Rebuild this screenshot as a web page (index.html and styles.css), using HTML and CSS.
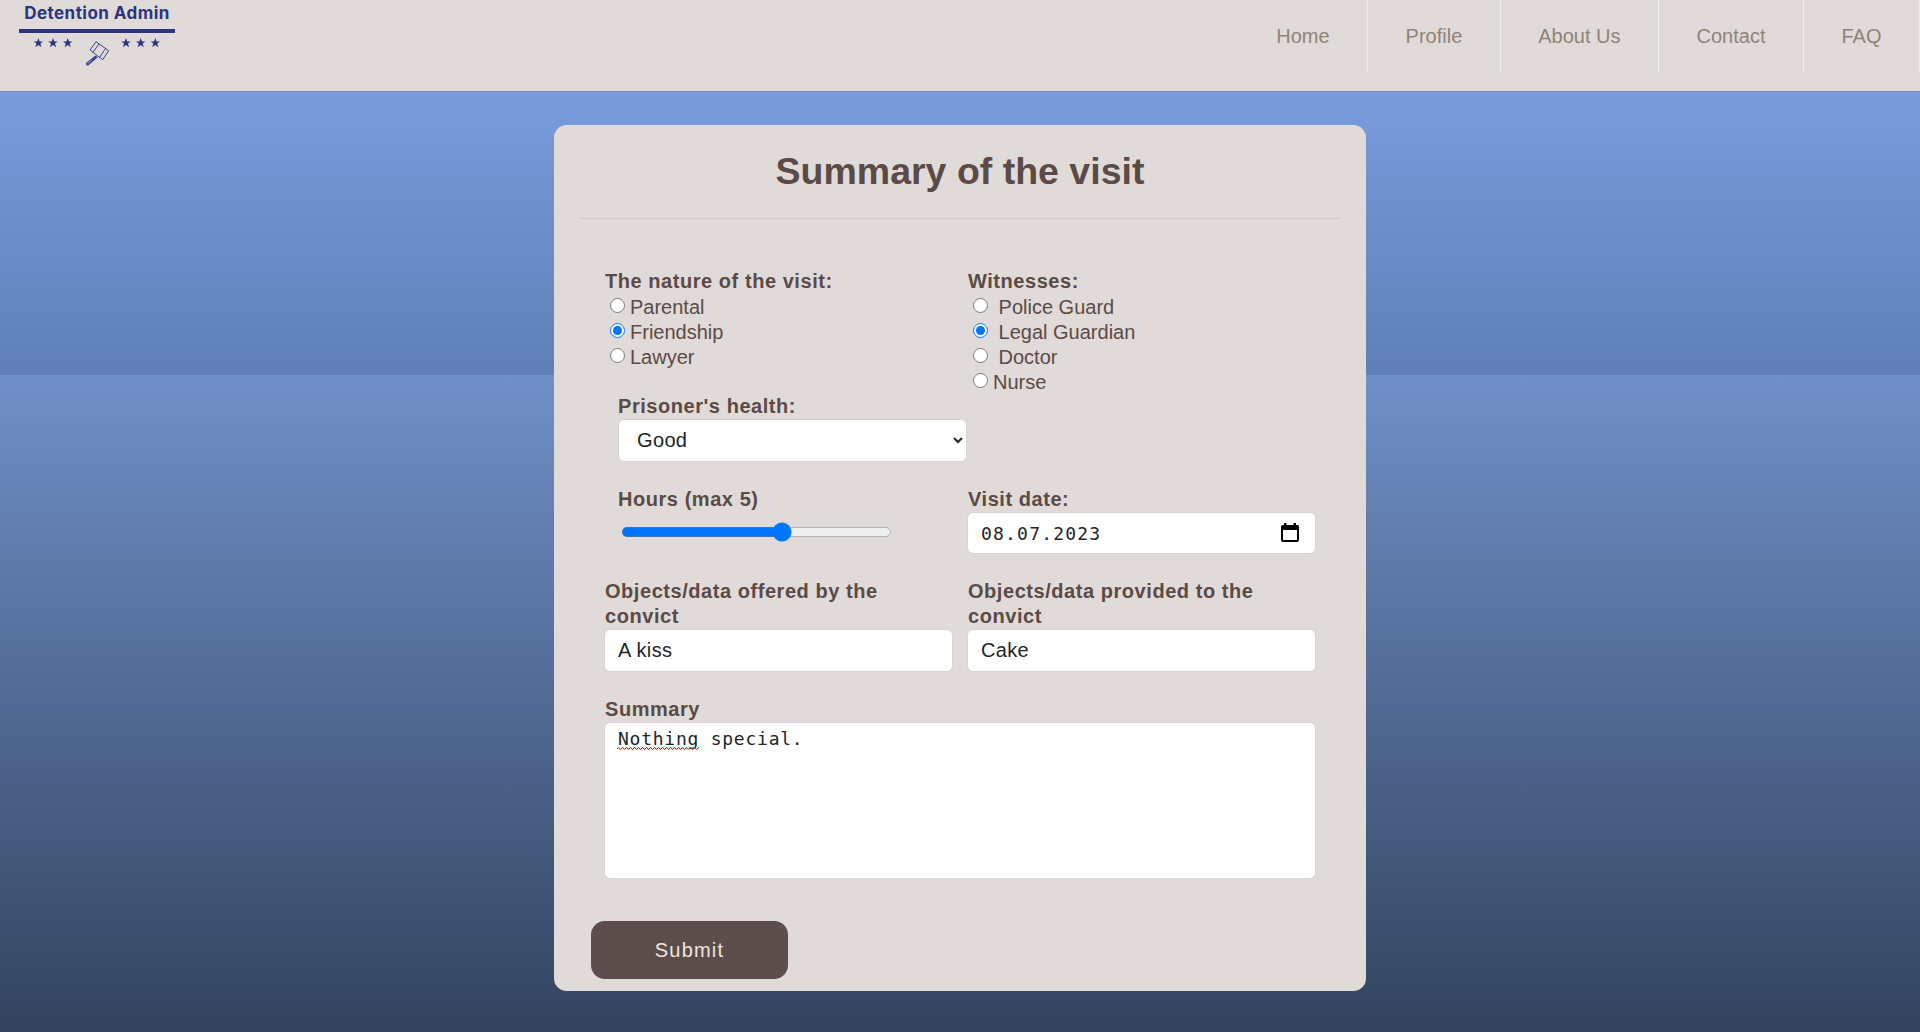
FILE: index.html
```html
<!DOCTYPE html>
<html lang="en">
<head>
<meta charset="utf-8">
<title>Summary of the visit</title>
<link rel="stylesheet" href="styles.css">
</head>
<body>
<header class="topbar">
  <a class="logo" href="#">
    <span class="logo-title">Detention Admin</span>
    <span class="logo-rule"></span>
    <svg class="logo-marks" width="156" height="36" viewBox="0 0 156 36">
      <defs>
        <polygon id="star" points="0,-5 1.3,-1.6 4.8,-1.6 2,0.6 3,4.2 0,2.1 -3,4.2 -2,0.6 -4.8,-1.6 -1.3,-1.6"/>
      </defs>
      <g fill="#2b3480">
        <use href="#star" x="19.4" y="8"/>
        <use href="#star" x="34" y="8"/>
        <use href="#star" x="48.7" y="8"/>
        <use href="#star" x="107" y="8"/>
        <use href="#star" x="121.7" y="8"/>
        <use href="#star" x="136.3" y="8"/>
      </g>
      <g fill="none" stroke="#3a4390" stroke-width="1" stroke-linejoin="round">
        <path d="M77 6.700 L89.700 15.700 L83.700 24.700 L71 15 Z"/>
        <path d="M80 8.900 L74 17.200 M86.500 13.500 L80.500 22.400"/>
      </g>
      <path d="M76.500 20.500 L67.200 27.800 A1.800 1.800 0 0 0 69.600 30.300 L78.800 22.200 Z" fill="#3a4390"/>
      <path d="M68.500 28.700 L72.500 25.200" stroke="#e0dbd8" stroke-width=".7"/>
    </svg>
  </a>
  <nav class="nav">
    <a href="#">Home</a>
    <a href="#">Profile</a>
    <a href="#">About Us</a>
    <a href="#">Contact</a>
    <a href="#">FAQ</a>
  </nav>
</header>
<main class="page">
  <form class="card">
    <h1 class="card-title">Summary of the visit</h1>
    <hr class="card-rule">
    <div class="form-body">
      <div class="row">
        <div>
          <div class="lbl">The nature of the visit:</div>
          <label class="opt"><input type="radio" name="nature">Parental</label>
          <label class="opt"><input type="radio" name="nature" checked>Friendship</label>
          <label class="opt"><input type="radio" name="nature">Lawyer</label>
          <div class="health">
            <div class="lbl">Prisoner's health:</div>
            <select class="field select"><option>Good</option><option>Bad</option></select>
          </div>
        </div>
        <div>
          <div class="lbl">Witnesses:</div>
          <label class="opt"><input type="radio" name="wit"> Police Guard</label>
          <label class="opt"><input type="radio" name="wit" checked> Legal Guardian</label>
          <label class="opt"><input type="radio" name="wit"> Doctor</label>
          <label class="opt"><input type="radio" name="wit">Nurse</label>
        </div>
      </div>
      <div class="row">
        <div class="hours">
          <div class="lbl">Hours (max 5)</div>
          <input class="range" type="range" min="0" max="5" value="3">
        </div>
        <div>
          <div class="lbl">Visit date:</div>
          <div class="date-wrap">
            <input class="field date-input" type="text" value="08.07.2023">
            <svg class="cal" width="18" height="19" viewBox="0 0 18 19">
              <path d="M3 0h2.500v2h7V0H15v2h1a2 2 0 0 1 2 2v13a2 2 0 0 1-2 2H2a2 2 0 0 1-2-2V4a2 2 0 0 1 2-2h1zM2 7v10h14V7z" fill="#000"/>
            </svg>
          </div>
        </div>
      </div>
      <div class="row">
        <div>
          <div class="lbl">Objects/data offered by the convict</div>
          <input class="field" type="text" value="A kiss">
        </div>
        <div>
          <div class="lbl">Objects/data provided to the convict</div>
          <input class="field" type="text" value="Cake">
        </div>
      </div>
      <div class="summary">
        <div class="lbl">Summary</div>
        <div class="area-wrap">
          <textarea class="field area" spellcheck="false">Nothing special.</textarea>
          <svg class="squiggle" width="82" height="3" viewBox="0 0 82 3">
            <defs>
              <pattern id="wave" width="4" height="3" patternUnits="userSpaceOnUse">
                <path d="M0 2.300 L1 .7 L2 .7 L3 2.300 L4 2.300" fill="none" stroke="#e8202a" stroke-width="1"/>
              </pattern>
            </defs>
            <rect width="82" height="3" fill="url(#wave)"/>
          </svg>
        </div>
      </div>
    </div>
    <button class="submit" type="button">Submit</button>
  </form>
</main>
</body>
</html>
```
FILE: styles.css
```css
* {
  box-sizing: border-box;
}

html,
body {
  margin: 0;
}

body {
  height: 1032px;
  overflow: hidden;
  font-family: "Liberation Sans", Arial, sans-serif;
  font-size: 20px;
  color: #5b4a46;
  background: linear-gradient(#7a9cdd 91px, #5f7fb6 375px, #6f90c8 375px, #33435e 1032px);
}

.topbar {
  display: flex;
  justify-content: space-between;
  align-items: flex-start;
  height: 91px;
  background: #e0dbd8;
  box-shadow: 0 1px 1px rgba(40, 60, 100, 0.15);
}

.logo {
  display: flex;
  flex-direction: column;
  align-items: center;
  width: 156px;
  margin-left: 19px;
  text-decoration: none;
}

.logo-title {
  margin-top: 3px;
  font-family: Inter, "Open Sans", sans-serif;
  font-size: 17px;
  font-weight: 700;
  letter-spacing: 0.45px;
  line-height: 20px;
  white-space: nowrap;
  color: #2b3480;
}

.logo-rule {
  width: 156px;
  height: 4px;
  margin-top: 6px;
  background: #2b3480;
}

.logo-marks {
  display: block;
  margin-top: 2px;
}

.nav {
  display: flex;
  height: 73px;
}

.nav a {
  padding: 0 37.500px;
  border-right: 1px solid #f1eeec;
  line-height: 72px;
  text-decoration: none;
  color: #8f8379;
}

.card {
  width: 812px;
  height: 866px;
  margin: 34px auto 0;
  padding: 24px 25px 12px;
  border-radius: 12.5px;
  background: #e0dbd8;
}

.card-title {
  margin: 0 0 25px;
  font-size: 37.500px;
  font-weight: 700;
  line-height: 44px;
  text-align: center;
}

.card-rule {
  height: 1px;
  margin: 0;
  border: 0;
  background: #cfcac8;
}

.form-body {
  display: flex;
  flex-direction: column;
  gap: 26px;
  padding: 50px 26px 0;
}

.row {
  display: grid;
  grid-template-columns: 347px 347px;
  gap: 16px;
}

.lbl {
  margin-bottom: 1px;
  font-weight: 700;
  letter-spacing: 0.55px;
  line-height: 25px;
}

.opt {
  display: block;
  height: 25px;
  line-height: 25px;
}

.opt input {
  width: 15px;
  height: 15px;
  margin: 0 5px 0 5px;
  vertical-align: 1px;
}

.health {
  margin: 24px 0 0 13px;
}

.field {
  display: block;
  width: 347px;
  height: 41px;
  padding: 0 13px;
  border: 0;
  border-radius: 5px;
  box-shadow: 0 0 0 1px #d8d4d2;
  background: #fff;
  font-family: "Liberation Sans", Arial, sans-serif;
  font-size: 20px;
  letter-spacing: 0.35px;
  color: #212529;
}

.select {
  margin-left: 1px;
  padding: 0 0 2px 14px;
}

.hours {
  padding-left: 13px;
}

.range {
  display: block;
  zoom: 1.25;
  width: 217.500px;
  margin: 7.700px 0 0 2px;
}

.date-wrap,
.area-wrap {
  position: relative;
}

.date-input {
  height: 40px;
  padding-top: 1px;
  font-family: "DejaVu Sans Mono", monospace;
  font-size: 18px;
  letter-spacing: 1.2px;
}

.cal {
  position: absolute;
  top: 10px;
  right: 16px;
}

.area {
  height: 155px;
  padding-top: 4px;
  width: 710px;
  font-family: "DejaVu Sans Mono", monospace;
  font-size: 18px;
  letter-spacing: 0.75px;
  line-height: 23px;
  resize: none;
}

.squiggle {
  position: absolute;
  top: 24px;
  left: 12px;
}

.submit {
  display: block;
  width: 197px;
  height: 58px;
  margin: 43px 0 0 12px;
  border: 0;
  border-radius: 14px;
  background: #5c4c4b;
  font-family: "Liberation Sans", Arial, sans-serif;
  font-size: 20px;
  letter-spacing: 1.200px;
  color: #efe6df;
}
```
